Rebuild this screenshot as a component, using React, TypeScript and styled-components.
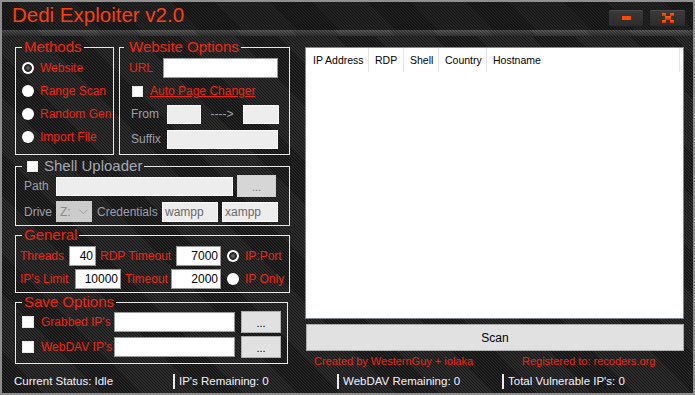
import styled, { createGlobalStyle } from 'styled-components';

const RED = '#f0230c';
const GREY = '#9ca0ad';

const GlobalStyle = createGlobalStyle`
    html, body {
        margin: 0;
        padding: 0;
        background: #1c1c1c;
    }
    #root {
        width: 695px;
        height: 395px;
    }
    * {
        box-sizing: border-box;
    }
`;

const carbon = (a: string, b: string) =>
    `repeating-linear-gradient(45deg, ${a} 0px, ${a} 1px, ${b} 1px, ${b} 2.1px)`;

const Window = styled.div`
    width: 695px;
    height: 395px;
    display: flex;
    flex-direction: column;
    border: 2px solid #8e8e8e;
    background: ${carbon('#151515', '#2d2d2d')};
    font-family: "Liberation Sans", Arial, sans-serif;
    overflow: hidden;
`;

const TitleBar = styled.div`
    height: 28px;
    flex-shrink: 0;
    display: flex;
    align-items: flex-start;
    padding: 0 7px 0 10px;
    background: ${carbon('#141414', '#242424')};
`;

const Title = styled.div`
    font-size: 20.5px;
    line-height: 28px;
    color: #ff3d0d;
    margin-top: -1px;
`;

const WinButtons = styled.div`
    margin-left: auto;
    margin-top: 7px;
    display: flex;
    gap: 5px;
`;

const WinButton = styled.div<{ $w: number }>`
    width: ${p => p.$w}px;
    height: 18px;
    display: flex;
    align-items: center;
    justify-content: center;
    border-radius: 2px;
    background: linear-gradient(#3a3a3a, #2c2c2c);
    border: 1px solid #1b1b1b;
    box-shadow: inset 0 1px 0 #4c4c4c;
`;

const Band = styled.div`
    height: 6px;
    flex-shrink: 0;
    background: linear-gradient(rgba(0, 0, 0, 0), rgba(20, 20, 20, 0.55)),
        ${carbon('#3a3a3a', '#5e5e5e')};
`;

const Body = styled.div`
    flex: 1;
    display: flex;
    padding: 2px 0 0 13px;
`;

const LeftCol = styled.div`
    width: 275px;
    display: flex;
    flex-direction: column;
`;

const GroupRow = styled.div`
    display: flex;
    justify-content: space-between;
`;

const Group = styled.fieldset<{ $w?: number; $h: number; $mt?: number }>`
    margin: ${p => p.$mt ?? 0}px 0 0 0;
    padding: 0;
    min-width: 0;
    width: ${p => (p.$w ? `${p.$w}px` : '100%')};
    height: ${p => p.$h}px;
    border: 1px solid #e8e8e8;
    display: flex;
    flex-direction: column;
`;

const Legend = styled.legend<{ $ml: number; $muted?: boolean; $pl?: number }>`
    margin-left: ${p => p.$ml}px;
    padding: 0 2px 0 ${p => p.$pl ?? 2}px;
    font-size: 15px;
    line-height: 18px;
    color: ${p => (p.$muted ? '#a3a7b3' : RED)};
    display: flex;
    align-items: center;
    gap: 6px;
`;

const Label = styled.span<{ $w?: number; $ml?: number; $muted?: boolean; $under?: boolean; $center?: boolean }>`
    ${p => (p.$w ? `width: ${p.$w}px;` : '')}
    margin-left: ${p => p.$ml ?? 0}px;
    flex-shrink: 0;
    white-space: nowrap;
    font-size: 12px;
    line-height: 14px;
    color: ${p => (p.$muted ? GREY : RED)};
    text-decoration: ${p => (p.$under ? 'underline' : 'none')};
    text-align: ${p => (p.$center ? 'center' : 'left')};
`;

const Row = styled.div<{ $h: number; $mt?: number; $pl?: number }>`
    height: ${p => p.$h}px;
    margin-top: ${p => p.$mt ?? 0}px;
    padding-left: ${p => p.$pl ?? 0}px;
    display: flex;
    align-items: center;
    flex-shrink: 0;
`;

const TextBox = styled.div<{ $w: number; $h?: number; $ml?: number; $tone?: 'white' | 'off'; $right?: boolean }>`
    width: ${p => p.$w}px;
    height: ${p => p.$h ?? 20}px;
    margin-left: ${p => p.$ml ?? 0}px;
    flex-shrink: 0;
    background: ${p => (p.$tone === 'off' ? '#ededed' : '#ffffff')};
    border: 1px solid ${p => (p.$tone === 'off' ? '#fafafa' : '#9a9a9a')};
    font-size: 12px;
    line-height: 18px;
    color: ${p => (p.$tone === 'off' ? '#6a6a6a' : '#000')};
    padding: 0 2px;
    text-align: ${p => (p.$right ? 'right' : 'left')};
    overflow: hidden;
`;

const DotsButton = styled.div<{ $w: number; $h: number; $ml: number; $off?: boolean }>`
    width: ${p => p.$w}px;
    height: ${p => p.$h}px;
    margin-left: ${p => p.$ml}px;
    flex-shrink: 0;
    background: ${p => (p.$off ? '#d6d6d6' : '#e1e1e1')};
    border: 1px solid ${p => (p.$off ? '#cfcfcf' : '#adadad')};
    font-size: 11px;
    color: ${p => (p.$off ? '#7a7a7a' : '#000')};
    display: flex;
    align-items: flex-end;
    justify-content: center;
    padding-bottom: 4px;
    line-height: 10px;
`;

const DriveSelect = styled.div`
    width: 36px;
    height: 21px;
    flex-shrink: 0;
    background: #cccccc;
    display: flex;
    align-items: center;
    justify-content: space-between;
    padding: 0 4px;
    font-size: 12px;
    color: #8a8a8a;
`;

const Check = styled.span<{ $size?: number }>`
    width: ${p => p.$size ?? 11}px;
    height: ${p => p.$size ?? 11}px;
    flex-shrink: 0;
    background: #fff;
    border: 1px solid #e8e8e8;
`;

const Radio = styled.span<{ $checked?: boolean; $ml?: number }>`
    width: 12px;
    height: 12px;
    margin-left: ${p => p.$ml ?? 0}px;
    flex-shrink: 0;
    border-radius: 50%;
    background: ${p =>
        p.$checked
            ? 'radial-gradient(circle, #5a5a5a 0 1.5px, #2e2e2e 2px 3.6px, #ffffff 4.1px)'
            : '#ffffff'};
`;

const MethodRow = styled.div`
    height: 23px;
    display: flex;
    align-items: center;
    padding-left: 6px;
    gap: 6px;
    flex-shrink: 0;
`;

const RightCol = styled.div`
    width: 379px;
    margin-left: 15px;
    display: flex;
    flex-direction: column;
`;

const ListView = styled.div`
    margin-top: 9px;
    height: 272px;
    background: #fff;
    border: 1px solid #828790;
    padding-left: 1px;
`;

const HeaderRow = styled.div`
    display: flex;
    height: 24px;
`;

const HeaderCell = styled.div<{ $w: number }>`
    width: ${p => p.$w}px;
    border-right: 1px solid #e5e5e5;
    padding-left: 6px;
    display: flex;
    align-items: center;
    font-size: 10.5px;
    color: #000;
    white-space: nowrap;
`;

const ScanButton = styled.div`
    margin: 5px 0 0 1px;
    height: 27px;
    background: #e1e1e1;
    border: 1px solid #adadad;
    display: flex;
    align-items: center;
    justify-content: center;
    font-size: 12px;
    color: #000;
`;

const Credits = styled.div`
    margin-top: 3px;
    padding-left: 9px;
    display: grid;
    grid-template-columns: 208px auto;
    font-size: 11px;
    line-height: 14px;
    color: ${RED};
`;

const StatusBar = styled.div`
    height: 22px;
    flex-shrink: 0;
    display: grid;
    grid-template-columns: 159px 164px 165px 1fr;
    align-items: center;
    padding-left: 12px;
    margin-bottom: 1px;
`;

const StatusItem = styled.div<{ $sep?: boolean }>`
    font-size: 11.5px;
    line-height: 15px;
    color: #f2f4ff;
    white-space: nowrap;
    ${p => (p.$sep ? 'border-left: 2px solid #ececec; padding-left: 4px;' : '')}
`;

function CloseGlyph() {
    return (
        <svg width="12" height="10" viewBox="0 0 12 10">
            <defs>
                <linearGradient id="cg" x1="0" y1="0" x2="0" y2="1">
                    <stop offset="0" stopColor="#ff6a00" />
                    <stop offset="1" stopColor="#ff1c00" />
                </linearGradient>
            </defs>
            <g fill="url(#cg)">
                <rect x="0" y="0" width="4" height="3" />
                <rect x="8" y="0" width="4" height="3" />
                <rect x="3" y="3" width="6" height="4" />
                <rect x="0" y="7" width="4" height="3" />
                <rect x="8" y="7" width="4" height="3" />
            </g>
        </svg>
    );
}

function MinGlyph() {
    return (
        <svg width="9" height="4" viewBox="0 0 9 4">
            <rect x="0" y="0" width="9" height="4" fill="#ff4a00" />
        </svg>
    );
}

function Chevron() {
    return (
        <svg width="9" height="6" viewBox="0 0 9 6">
            <path d="M0.5 0.8 L4.5 4.8 L8.5 0.8" stroke="#9a9a9a" strokeWidth="1" fill="none" />
        </svg>
    );
}

const methods = ['Website', 'Range Scan', 'Random Gen', 'Import File'];
const columns: [string, number][] = [
    ['IP Address', 62],
    ['RDP', 35],
    ['Shell', 35],
    ['Country', 48],
    ['Hostname', 193],
];

export default function App() {
    return (
        <>
            <GlobalStyle />
            <Window>
                <TitleBar>
                    <Title>Dedi Exploiter v2.0</Title>
                    <WinButtons>
                        <WinButton $w={36}><MinGlyph /></WinButton>
                        <WinButton $w={37}><CloseGlyph /></WinButton>
                    </WinButtons>
                </TitleBar>
                <Band />
                <Body>
                    <LeftCol>
                        <GroupRow>
                            <Group $w={99} $h={117}>
                                <Legend $ml={6}>Methods</Legend>
                                {methods.map((m, i) => (
                                    <MethodRow key={m}>
                                        <Radio $checked={i === 0} />
                                        <Label>{m}</Label>
                                    </MethodRow>
                                ))}
                            </Group>
                            <Group $w={171} $h={117}>
                                <Legend $ml={4} $pl={5}>Website Options</Legend>
                                <Row $h={20} $mt={2} $pl={9}>
                                    <Label $w={34}>URL</Label>
                                    <TextBox $w={115} />
                                </Row>
                                <Row $h={26} $pl={12}>
                                    <Check />
                                    <Label $ml={7} $under>Auto Page Changer</Label>
                                </Row>
                                <Row $h={20} $pl={11}>
                                    <Label $w={36} $muted>From</Label>
                                    <TextBox $w={34} $h={19} $tone="off" />
                                    <Label $w={42} $muted $center>----&gt;</Label>
                                    <TextBox $w={36} $h={19} $tone="off" />
                                </Row>
                                <Row $h={20} $mt={5} $pl={11}>
                                    <Label $w={36} $muted>Suffix</Label>
                                    <TextBox $w={111} $h={19} $tone="off" />
                                </Row>
                            </Group>
                        </GroupRow>

                        <Group $h={69} $mt={2}>
                            <Legend $ml={6} $pl={5} $muted>
                                <Check />
                                Shell Uploader
                            </Legend>
                            <Row $h={22} $pl={8}>
                                <Label $w={32} $muted>Path</Label>
                                <TextBox $w={177} $h={19} $tone="off" />
                                <DotsButton $w={39} $h={22} $ml={4} $off>...</DotsButton>
                            </Row>
                            <Row $h={21} $mt={4} $pl={8}>
                                <Label $w={32} $muted>Drive</Label>
                                <DriveSelect>
                                    <span>Z:</span>
                                    <Chevron />
                                </DriveSelect>
                                <Label $w={65} $ml={5} $muted>Credentials</Label>
                                <TextBox $w={56} $h={20} $tone="off">wampp</TextBox>
                                <TextBox $w={56} $h={20} $ml={4} $tone="off">xampp</TextBox>
                            </Row>
                        </Group>

                        <Group $h={67}>
                            <Legend $ml={6}>General</Legend>
                            <Row $h={20} $mt={2} $pl={4}>
                                <Label $w={49}>Threads</Label>
                                <TextBox $w={27} $right>40</TextBox>
                                <Label $w={76} $ml={4}>RDP Timeout</Label>
                                <TextBox $w={45} $right>7000</TextBox>
                                <Radio $checked $ml={6} />
                                <Label $ml={6}>IP:Port</Label>
                            </Row>
                            <Row $h={20} $mt={3} $pl={4}>
                                <Label $w={55}>IP's Limit</Label>
                                <TextBox $w={46} $right>10000</TextBox>
                                <Label $w={46} $ml={4}>Timeout</Label>
                                <TextBox $w={50} $right>2000</TextBox>
                                <Radio $ml={6} />
                                <Label $ml={6}>IP Only</Label>
                            </Row>
                        </Group>

                        <Group $w={273} $h={71}>
                            <Legend $ml={6}>Save Options</Legend>
                            <Row $h={21} $pl={6}>
                                <Check $size={12} />
                                <Label $w={73} $ml={7}>Grabbed IP's</Label>
                                <TextBox $w={121} />
                                <DotsButton $w={40} $h={22} $ml={6}>...</DotsButton>
                            </Row>
                            <Row $h={21} $mt={4} $pl={6}>
                                <Check $size={12} />
                                <Label $w={73} $ml={7}>WebDAV IP's</Label>
                                <TextBox $w={121} />
                                <DotsButton $w={40} $h={22} $ml={6}>...</DotsButton>
                            </Row>
                        </Group>
                    </LeftCol>

                    <RightCol>
                        <ListView>
                            <HeaderRow>
                                {columns.map(([name, w]) => (
                                    <HeaderCell key={name} $w={w}>{name}</HeaderCell>
                                ))}
                            </HeaderRow>
                        </ListView>
                        <ScanButton>Scan</ScanButton>
                        <Credits>
                            <span>Created by WesternGuy + iolaka</span>
                            <span>Registered to: recoders.org</span>
                        </Credits>
                    </RightCol>
                </Body>
                <StatusBar>
                    <StatusItem>Current Status: Idle</StatusItem>
                    <StatusItem $sep>IP's Remaining: 0</StatusItem>
                    <StatusItem $sep>WebDAV Remaining: 0</StatusItem>
                    <StatusItem $sep>Total Vulnerable IP's: 0</StatusItem>
                </StatusBar>
            </Window>
        </>
    );
}
